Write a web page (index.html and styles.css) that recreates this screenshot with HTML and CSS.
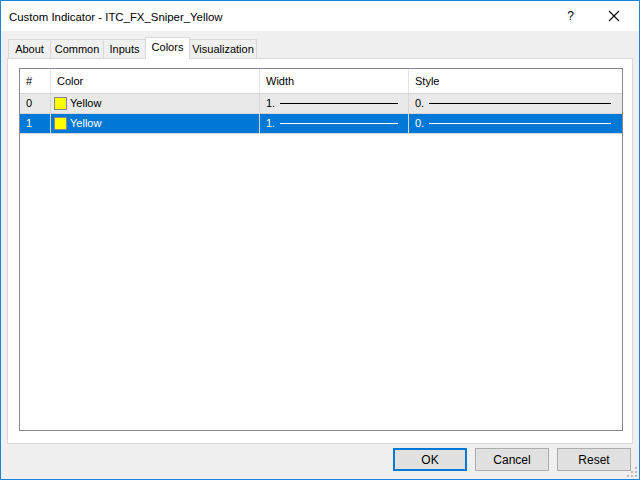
FILE: index.html
```html
<!doctype html>
<html lang="en">
    <head>
        <meta charset="UTF-8" />
        <title>Custom Indicator - ITC_FX_Sniper_Yellow</title>
        <link rel="stylesheet" href="styles.css">
    </head>
    <body>
        <div class="window">
            <div class="titlebar">
                <span class="title">Custom Indicator - ITC_FX_Sniper_Yellow</span>
                <span class="help">?</span>
                <svg class="close" width="12" height="12" viewBox="0 0 12 12">
                    <path d="M1 1 L11 11 M11 1 L1 11" stroke="#000" stroke-width="1.1" />
                </svg>
            </div>
            <div class="content">
                <div class="tabs">
                    <div class="tab tabAbout">About</div>
                    <div class="tab tabCommon">Common</div>
                    <div class="tab tabInputs">Inputs</div>
                    <div class="tab tabColors active">Colors</div>
                    <div class="tab tabVis">Visualization</div>
                </div>
                <div class="panel">
                    <div class="list">
                        <div class="row header">
                            <div class="cell num">#</div>
                            <div class="cell color">Color</div>
                            <div class="cell width">Width</div>
                            <div class="cell style">Style</div>
                        </div>
                        <div class="row item">
                            <div class="cell num">0</div>
                            <div class="cell color"><span class="swatch"></span>Yellow</div>
                            <div class="cell width">1.<span class="line"></span></div>
                            <div class="cell style">0.<span class="line"></span></div>
                        </div>
                        <div class="row item selected">
                            <div class="cell num">1</div>
                            <div class="cell color"><span class="swatch"></span>Yellow</div>
                            <div class="cell width">1.<span class="line"></span></div>
                            <div class="cell style">0.<span class="line"></span></div>
                        </div>
                    </div>
                </div>
                <div class="buttons">
                    <button class="btn default">OK</button>
                    <button class="btn">Cancel</button>
                    <button class="btn">Reset</button>
                </div>
                <svg class="grip" width="10" height="10" viewBox="0 0 10 10">
                    <rect x="8" y="0" width="2" height="2" fill="#bcbcbc" />
                    <rect x="4" y="4" width="2" height="2" fill="#bcbcbc" />
                    <rect x="8" y="4" width="2" height="2" fill="#bcbcbc" />
                    <rect x="0" y="8" width="2" height="2" fill="#bcbcbc" />
                    <rect x="4" y="8" width="2" height="2" fill="#bcbcbc" />
                    <rect x="8" y="8" width="2" height="2" fill="#bcbcbc" />
                </svg>
            </div>
        </div>
    </body>
</html>
```

FILE: styles.css
```css
body {
    margin: 0;
    font-family: "Liberation Sans", Arial, sans-serif;
    font-size: 11px;
    color: #000;
}
.window {
    width: 638px;
    height: 478px;
    border: 1px solid #1c84d8;
    background: #f0f0f0;
    display: flex;
    flex-direction: column;
}
.titlebar {
    height: 30px;
    background: #fff;
    display: flex;
    align-items: center;
    padding-left: 8px;
}
.title {
    font-size: 11.4px;
    flex: 1;
    padding-top: 1px;
}
.help {
    font-size: 12px;
    margin-right: 34px;
}
.close {
    margin-right: 19px;
}
.content {
    flex: 1;
    position: relative;
    padding: 6px 6px 0 6px;
}
.tabs {
    display: flex;
    height: 21px;
    padding-left: 1px;
    align-items: flex-end;
}
.tab {
    box-sizing: border-box;
    height: 19px;
    line-height: 19px;
    text-align: center;
    border: 1px solid #d9d9d9;
    border-bottom: none;
    margin-left: -1px;
    background: #f0f0f0;
}
.tab:first-child {
    margin-left: 0;
}
.tab.active {
    height: 22px;
    line-height: 19px;
    background: #fff;
    position: relative;
    z-index: 1;
    margin-bottom: -1px;
}
.tabAbout {
    width: 43px;
}
.tabCommon {
    width: 54px;
}
.tabInputs {
    width: 43px;
}
.tabColors {
    width: 45px;
}
.tabVis {
    width: 68px;
}
.panel {
    height: 375px;
    background: #fff;
    border: 1px solid #d9d9d9;
    padding: 9px 9px 0 11px;
}
.list {
    height: 361px;
    border: 1px solid #828790;
    background: #fff;
}
.row {
    display: flex;
    height: 19px;
    line-height: 19px;
    border-bottom: 1px solid #d6d6d6;
}
.row.header {
    height: 24px;
    line-height: 24px;
    border-bottom: 1px solid #d6d6d6;
}
.cell {
    padding-left: 6px;
    border-right: 1px solid #e5e5e5;
    display: flex;
    align-items: center;
    box-sizing: border-box;
}
.num {
    width: 31px;
}
.color {
    width: 209px;
}
.width {
    width: 149px;
}
.style {
    width: 212px;
    border-right: none;
}
.item {
    background: #e9e9e9;
}
.item .cell {
    border-right-color: #d6d6d6;
}
.item.selected {
    background: #0078d7;
    color: #fff;
}
.swatch {
    width: 11px;
    height: 11px;
    background: #ffff00;
    border: 1px solid #888;
    margin: 0 3px 0 -3px;
}
.line {
    height: 1px;
    background: #000;
    margin-left: 5px;
    margin-right: 10px;
    flex: 1;
}
.selected .line {
    background: #fff;
}
.buttons {
    display: flex;
    justify-content: flex-end;
    gap: 8px;
    margin-top: 4px;
    padding-right: 2px;
}
.btn {
    width: 74px;
    height: 23px;
    background: #e1e1e1;
    border: 1px solid #adadad;
    font-family: "Liberation Sans", Arial, sans-serif;
    font-size: 12px;
    color: #000;
    padding: 0;
}
.btn.default {
    border: 2px solid #0078d7;
}
.grip {
    position: absolute;
    right: 2px;
    bottom: 2px;
}
```
